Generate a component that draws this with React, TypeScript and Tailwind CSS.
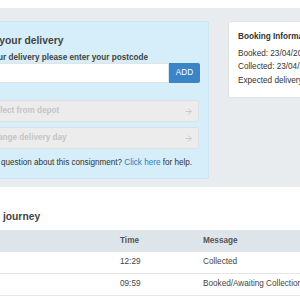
import { ArrowRight } from "lucide-react";

const events = [
  { time: "12:29", message: "Collected" },
  { time: "09:59", message: "Booked/Awaiting Collection" },
];

const App = () => {
  return (
    <div className="w-[300px] h-[300px] overflow-hidden bg-white font-['Liberation_Sans',Arial,sans-serif] text-[#333]">
      <div className="h-[8px]" />
      <section className="bg-[#e8ecef] pt-[13px] pb-[8px]">
        <div className="flex items-start gap-[19px] ml-[-38px]">
          <div className="w-[247px] shrink-0 bg-[#d5eef9] border border-[#c8e6f4] rounded-[2px] pl-[10px] pr-[8px] pt-[12px] pb-[10px]">
            <h2 className="text-[10.3px] leading-[13px] font-bold text-[#444]">
              Alter your delivery
            </h2>
            <p className="mt-[4.5px] text-[8.2px] leading-[11px] font-bold text-[#444]">
              For your delivery please enter your postcode
            </p>
            <div className="mt-[0.5px] flex h-[20px]">
              <input
                className="flex-1 min-w-0 bg-white border border-[#e3e3e3] rounded-l-[2px] outline-none"
                type="text"
              />
              <button className="w-[31px] bg-[#3b85c6] text-white text-[8.2px] rounded-r-[2px]">
                ADD
              </button>
            </div>
            <div className="mt-[17px] flex flex-col gap-[5px] pr-[1px]">
              {["Collect from depot", "Change delivery day"].map((label) => (
                <button
                  key={label}
                  disabled
                  className="h-[22px] flex items-center justify-between bg-[#ececec] border border-[#e0e0e0] rounded-[2px] pl-[13px] pr-[5px] text-[8.2px] font-bold text-[#c4c4c4]"
                >
                  <span>{label}</span>
                  <ArrowRight size={9} strokeWidth={2} color="#bdbdbd" />
                </button>
              ))}
            </div>
            <p className="mt-[8px] text-[8.15px] leading-[11px] text-[#333]">
              Have a question about this consignment?{" "}
              <a className="text-[#2a7fc1]">Click here</a> for help.
            </p>
          </div>
          <div className="w-[160px] shrink-0 bg-white border border-[#e2e2e2] rounded-[2px] pl-[9px] pt-[9px] pb-[10px] text-[8.2px] text-[#333]">
            <h3 className="font-bold leading-[12px]">Booking Information</h3>
            <div className="mt-[3.5px] leading-[13.5px]">
              <p>Booked: 23/04/2019</p>
              <p>Collected: 23/04/2019</p>
              <p>Expected delivery: 24/04/2019</p>
            </div>
          </div>
        </div>
      </section>
      <section className="pt-[22.5px] ml-[-40px] w-[500px]">
        <h2 className="text-[10.3px] leading-[13px] font-bold text-[#444]">
          Delivery journey
        </h2>
        <div className="mt-[7.5px] text-[8.2px]">
          <div className="grid grid-cols-[152px_83px_1fr] h-[22px] items-center bg-[#dde5eb] font-bold text-[#555]">
            <div className="pl-[8px]" />
            <div className="pl-[8px]">Time</div>
            <div className="pl-[8px]">Message</div>
          </div>
          {events.map((e) => (
            <div
              key={e.time}
              className="grid grid-cols-[152px_83px_1fr] h-[22px] items-center border-b border-[#e6e6e6] text-[#444]"
            >
              <div className="pl-[8px]" />
              <div className="pl-[8px]">{e.time}</div>
              <div className="pl-[8px]">{e.message}</div>
            </div>
          ))}
        </div>
      </section>
    </div>
  );
};

export default App;
